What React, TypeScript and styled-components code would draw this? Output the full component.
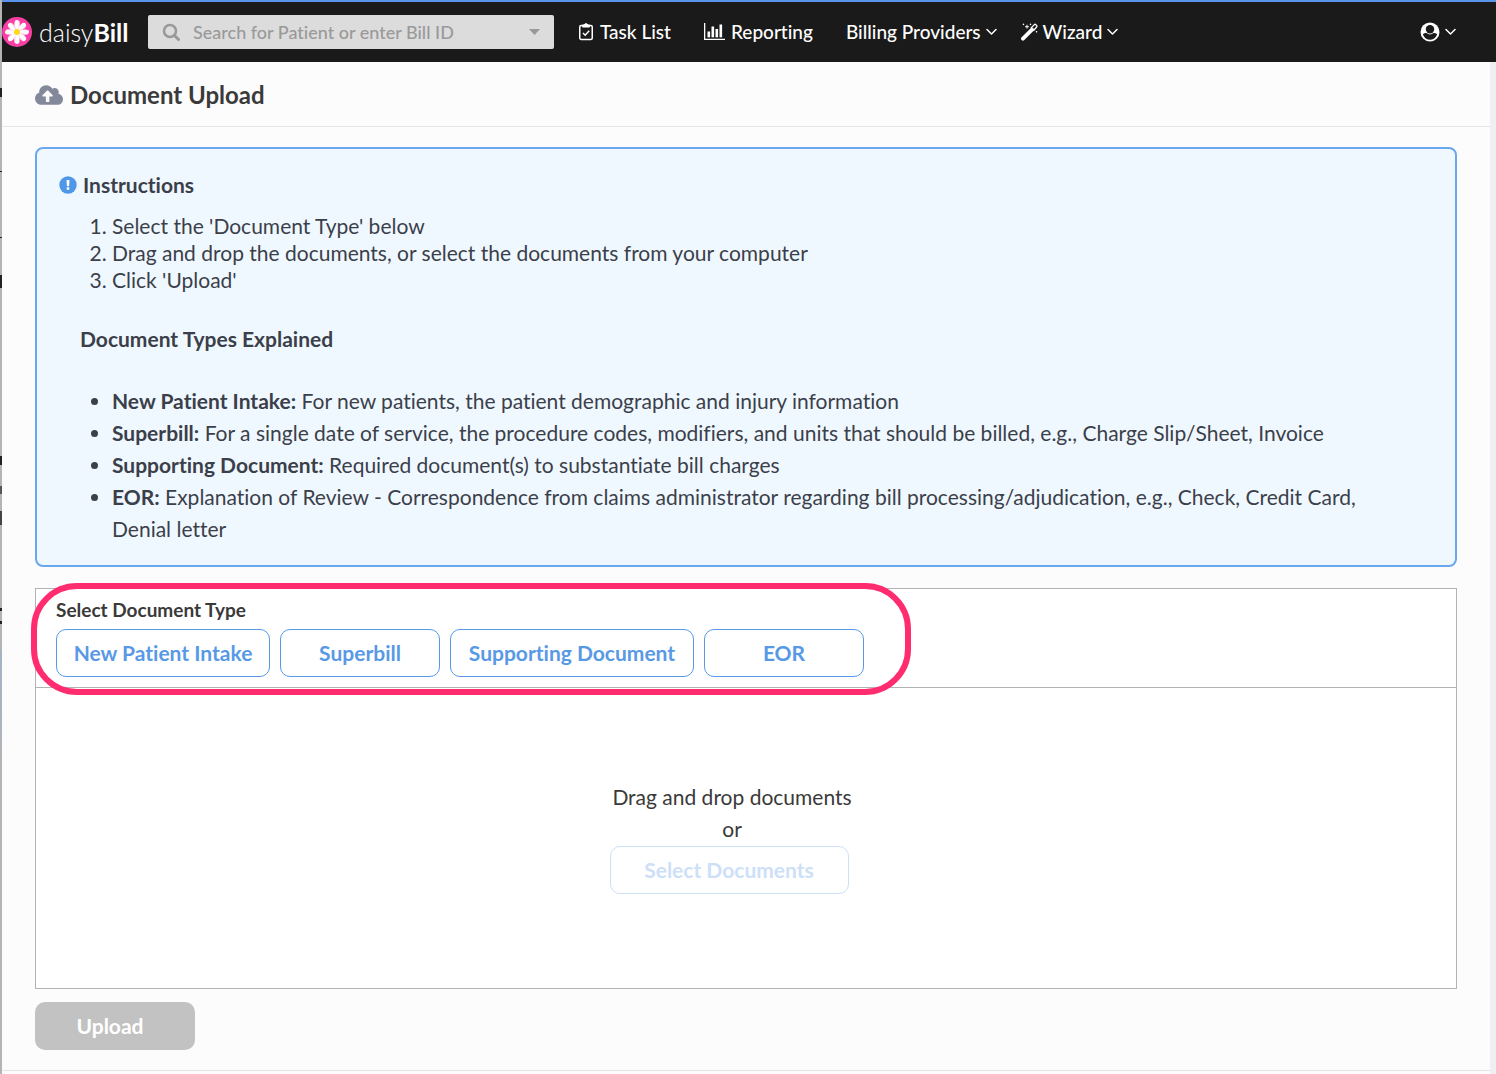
import React from "react";
import styled, { createGlobalStyle } from "styled-components";
import { FaCloudUploadAlt } from "react-icons/fa";

const Global = createGlobalStyle`
  *, *::before, *::after { box-sizing: border-box; }
  html, body { margin: 0; }
  body {
    font-family: Lato, "Liberation Sans", sans-serif;
    font-size: 21px;
    line-height: 32px;
    font-variant-ligatures: none;
    color: #3a3a3a;
    background: #fcfcfc;
  }
  h1, h2, h3, p, ul, ol { margin: 0; padding: 0; }
  button, input { font: inherit; font-variant-ligatures: none; }
`;

const Shell = styled.div`
  display: grid;
  grid-template-columns: 2px minmax(0, 1fr);
  min-height: 100vh;
`;

const WindowEdge = styled.div`
  background:
    linear-gradient(#222, #222) 0 88px / 2px 9px no-repeat,
    linear-gradient(#222, #222) 0 171px / 2px 1px no-repeat,
    linear-gradient(#222, #222) 0 237px / 2px 1px no-repeat,
    linear-gradient(#222, #222) 0 275px / 2px 13px no-repeat,
    linear-gradient(#222, #222) 0 456px / 2px 9px no-repeat,
    linear-gradient(#555, #555) 0 486px / 2px 8px no-repeat,
    linear-gradient(#444, #444) 0 511px / 2px 14px no-repeat,
    linear-gradient(#222, #222) 0 608px / 2px 3px no-repeat,
    linear-gradient(#222, #222) 0 621px / 2px 3px no-repeat,
    linear-gradient(#a3b4c6, #b4b4b4) 0 650px / 2px 130px no-repeat,
    #b4b4b4;
`;

const Page = styled.div`
  display: flex;
  flex-direction: column;
  min-width: 0;
`;

const TopBar = styled.header`
  display: flex;
  align-items: center;
  height: 62px;
  border-top: 2px solid #5b95ea;
  background: #1a1a1a;
  color: #fff;
  padding-right: 40px;
`;

const Brand = styled.a`
  display: flex;
  align-items: center;
  gap: 7px;
  width: 146px;
  color: #fff;
  text-decoration: none;
  font-size: 25px;
  font-weight: 300;
  white-space: nowrap;

  svg { flex: none; }
  b { font-weight: 700; }
`;

const SearchBox = styled.label`
  display: flex;
  align-items: center;
  gap: 12px;
  flex: 0 1 406px;
  height: 34px;
  padding: 0 14px;
  border-radius: 2px;
  background: #dcdcdc;
  color: #999;

  input {
    flex: 1;
    min-width: 0;
    height: 32px;
    padding: 0;
    border: 0;
    outline: 0;
    background: transparent;
    font-size: 18px;
    font-weight: 500;
    color: #333;
  }
  input::placeholder { color: #999; opacity: 1; }
  svg { flex: none; }
`;

const Nav = styled.nav`
  display: flex;
  flex: 1;
  align-items: center;
  gap: 33px;
  padding-left: 24px;
`;

const MenuGroup = styled.div`
  display: flex;
  align-items: center;
  gap: 24px;
`;

const NavLink = styled.a`
  display: flex;
  align-items: center;
  gap: 6px;
  color: #fff;
  font-size: 19px;
  font-weight: 500;
  text-decoration: none;
  white-space: nowrap;
`;

const NavMenu = styled.button`
  display: flex;
  align-items: center;
  gap: 5px;
  padding: 0;
  border: 0;
  background: none;
  color: #fff;
  font-size: 19px;
  font-weight: 500;
  white-space: nowrap;
  cursor: pointer;
`;

const Backdrop = styled.div`
  display: flex;
  flex: 1;
  flex-direction: column;
  padding-right: 6px;
  background: #efeff1;
`;

const Body = styled.main`
  flex: 1;
  background: #fcfcfc;
`;

const TitleRow = styled.div`
  display: flex;
  align-items: center;
  gap: 7px;
  height: 65px;
  padding: 2px 33px 0;
  border-bottom: 1px solid #e6e6e6;

  svg { color: #84889b; }
  h1 { font-size: 24px; font-weight: 700; }
`;

const Content = styled.div`
  padding: 20px 33px;
  border-bottom: 1px solid #e3e3e3;
`;

const Instructions = styled.section`
  padding: 20px 22px;
  border: 2px solid #6ba7ee;
  border-radius: 8px;
  background: #f0f8ff;
  color: #3b3f4a;

  h2 {
    display: flex;
    align-items: center;
    gap: 6px;
    font-size: 21px;
    font-weight: 700;
  }
  h3 {
    margin: 30px 0;
    padding-left: 21px;
    font-size: 21px;
    font-weight: 700;
  }
`;

const Steps = styled.ol`
  && { margin-top: 11px; padding-left: 53px; }
  line-height: 27px;
`;

const Types = styled.ul`
  && { padding: 0 32px 0 53px; }
  b { font-weight: 700; }
`;

const UploadPanel = styled.section`
  position: relative;
  margin-top: 21px;
  border: 1px solid #b3b3b3;
  background: #fff;
`;

const TypePicker = styled.div`
  padding: 5px 20px 10px;
  border-bottom: 1px solid #b3b3b3;

  h2 { font-size: 19px; font-weight: 700; }
`;

const TypeRow = styled.div`
  display: flex;
  flex-wrap: wrap;
  gap: 10px;
  padding-top: 3px;
`;

const OutlineButton = styled.button<{ $width: number }>`
  min-width: ${(p) => p.$width}px;
  height: 48px;
  padding: 0 16px;
  border: 1px solid #5899e6;
  border-radius: 10px;
  background: #fff;
  color: #5899e6;
  font-weight: 700;
  white-space: nowrap;
  cursor: pointer;

  &:disabled {
    border-color: #cde0f8;
    color: #cde0f8;
    cursor: default;
  }
`;

const Highlight = styled.div`
  position: absolute;
  top: -6px;
  left: -5px;
  width: 880px;
  height: 112px;
  border: 6px solid #ff2d6f;
  border-radius: 46px;
  pointer-events: none;
`;

const DropZone = styled.div`
  display: flex;
  justify-content: center;
  padding: 93px 28px 94px 0;
`;

const DropGroup = styled.div`
  display: flex;
  flex-direction: column;
  align-items: flex-start;
  min-width: 245px;

  p { align-self: center; }
  button { margin-top: 1px; }
`;

const UploadButton = styled.button`
  width: 160px;
  height: 48px;
  margin-top: 13px;
  padding: 0 10px 0 0;
  border: 0;
  border-radius: 10px;
  background: #c2c2c2;
  color: #fff;
  font-weight: 700;
`;

const petals = [0, 45, 90, 135, 180, 225, 270, 315];

const Daisy = () => (
  <svg width="30" height="30" viewBox="0 0 30 30" aria-hidden="true">
    <circle cx="15" cy="15" r="15" fill="#f93fa6" />
    {petals.map((a) => (
      <g key={a} transform={`rotate(${a} 15 15)`}>
        <path d="M15 15C12 10.500 11.200 3 14.800 3C19 3 18.500 10.500 15 15Z" fill="#fff" />
        <path d="M15 15C16.500 11 18 8 17.200 4.500" stroke="#fbb6dc" strokeWidth="0.8" fill="none" />
      </g>
    ))}
    <circle cx="15" cy="15" r="3" fill="#ffd91a" />
  </svg>
);

const SearchIcon = () => (
  <svg width="19" height="19" viewBox="0 0 19 19" fill="none" stroke="currentColor" aria-hidden="true">
    <circle cx="8" cy="8" r="6" strokeWidth="2.5" />
    <path d="M12.500 12.500L16.500 16.500" strokeWidth="3" strokeLinecap="round" />
  </svg>
);

const CaretIcon = () => (
  <svg width="11" height="6" viewBox="0 0 11 6" fill="currentColor" aria-hidden="true">
    <path d="M0 0H11L5.500 6Z" />
  </svg>
);

const Chevron = () => (
  <svg width="11" height="8" viewBox="0 0 11 8" fill="none" stroke="currentColor" strokeWidth="1.5" strokeLinecap="round" strokeLinejoin="round" aria-hidden="true">
    <path d="M1 1.500L5.500 6L10 1.500" />
  </svg>
);

const TaskIcon = () => (
  <svg width="16" height="20" viewBox="0 0 16 20" fill="none" stroke="currentColor" strokeWidth="1.5" aria-hidden="true">
    <rect x="1.750" y="3.500" width="12.500" height="14" rx="1.500" />
    <path d="M4.500 5V3H6.300C6.500 1.200 9.500 1.200 9.700 3H11.500V5Z" fill="currentColor" strokeWidth="1" />
    <path d="M5 11L7.200 13.200L11.200 8.800" />
  </svg>
);

const ReportIcon = () => (
  <svg width="21" height="18" viewBox="0 0 21 18" fill="currentColor" aria-hidden="true">
    <path d="M0 0H1.300V15.700H21V17H0Z" />
    <rect x="3.500" y="8.500" width="2.600" height="5.800" />
    <rect x="7.500" y="3.500" width="2.600" height="10.800" />
    <rect x="11.500" y="6" width="2.600" height="8.300" />
    <rect x="15.500" y="1.500" width="2.600" height="12.800" />
  </svg>
);

const WandIcon = () => (
  <svg width="17" height="18" viewBox="0 0 17 18" fill="none" stroke="currentColor" aria-hidden="true">
    <path d="M2 15.700L11 6.700" strokeWidth="3.800" strokeLinecap="round" />
    <path d="M9.900 5.300L13.300 1.600Q14 0.900 14.600 1.500L15.700 2.600Q16.300 3.300 15.600 4L12.400 7.700" strokeWidth="1.300" />
    <path d="M6 1.800V5.600M4.100 3.700H7.900M2.500 0.700V2.100M1.800 1.400H3.200M9.500 0.700V2.100M8.800 1.400H10.200M15.500 8V9.400M14.800 8.700H16.200" strokeWidth="1" />
  </svg>
);

const UserIcon = () => (
  <svg width="20" height="20" viewBox="0 0 20 20" aria-hidden="true">
    <circle cx="10" cy="10" r="9.500" fill="#fff" />
    <path d="M2.800 12.300C3.800 11.500 5 11.200 6.500 11.100C8.600 13 11.400 13 13.500 11.100C15 11.200 16.200 11.500 17.200 12.300C14.600 19.700 5.400 19.700 2.800 12.300Z" fill="#1a1a1a" />
    <circle cx="10" cy="7.300" r="4.200" fill="#1a1a1a" />
  </svg>
);

const InfoIcon = () => (
  <svg width="18" height="18" viewBox="0 0 18 18" aria-hidden="true">
    <circle cx="9" cy="9" r="8.700" fill="#4f97e8" />
    <path d="M7.500 4H10.500L10.100 10.200H7.900Z" fill="#fff" />
    <rect x="7.700" y="11.300" width="2.600" height="2.500" rx="0.600" fill="#fff" />
  </svg>
);

const steps = [
  "Select the 'Document Type' below",
  "Drag and drop the documents, or select the documents from your computer",
  "Click 'Upload'",
];

const explained = [
  ["New Patient Intake:", "For new patients, the patient demographic and injury information"],
  ["Superbill:", "For a single date of service, the procedure codes, modifiers, and units that should be billed, e.g., Charge Slip/Sheet, Invoice"],
  ["Supporting Document:", "Required document(s) to substantiate bill charges"],
  ["EOR:", "Explanation of Review - Correspondence from claims administrator regarding bill processing/adjudication, e.g., Check, Credit Card, Denial letter"],
];

const documentTypes = [
  { label: "New Patient Intake", width: 214 },
  { label: "Superbill", width: 160 },
  { label: "Supporting Document", width: 244 },
  { label: "EOR", width: 160 },
];

export default function App() {
  return (
    <>
      <Global />
      <Shell>
        <WindowEdge />
        <Page>
          <TopBar>
            <Brand href="#">
              <Daisy />
              <span>daisy<b>Bill</b></span>
            </Brand>
            <SearchBox>
              <SearchIcon />
              <input type="text" aria-label="Search" placeholder="Search for Patient or enter Bill ID" />
              <CaretIcon />
            </SearchBox>
            <Nav>
              <NavLink href="#"><TaskIcon />Task List</NavLink>
              <NavLink href="#"><ReportIcon />Reporting</NavLink>
              <MenuGroup>
                <NavMenu>Billing Providers<Chevron /></NavMenu>
                <NavMenu><WandIcon />Wizard<Chevron /></NavMenu>
              </MenuGroup>
            </Nav>
            <NavMenu aria-label="Account"><UserIcon /><Chevron /></NavMenu>
          </TopBar>
          <Backdrop>
            <Body>
              <TitleRow>
                <FaCloudUploadAlt size={28} />
                <h1>Document Upload</h1>
              </TitleRow>
              <Content>
                <Instructions>
                  <h2><InfoIcon />Instructions</h2>
                  <Steps>{steps.map((s) => <li key={s}>{s}</li>)}</Steps>
                  <h3>Document Types Explained</h3>
                  <Types>
                    {explained.map(([name, text]) => (
                      <li key={name}><b>{name}</b> {text}</li>
                    ))}
                  </Types>
                </Instructions>
                <UploadPanel>
                  <TypePicker>
                    <h2>Select Document Type</h2>
                    <TypeRow>
                      {documentTypes.map((d) => (
                        <OutlineButton key={d.label} $width={d.width}>{d.label}</OutlineButton>
                      ))}
                    </TypeRow>
                  </TypePicker>
                  <DropZone>
                    <DropGroup>
                      <p>Drag and drop documents</p>
                      <p>or</p>
                      <OutlineButton $width={239} disabled>Select Documents</OutlineButton>
                    </DropGroup>
                  </DropZone>
                  <Highlight />
                </UploadPanel>
                <UploadButton disabled>Upload</UploadButton>
              </Content>
            </Body>
          </Backdrop>
        </Page>
      </Shell>
    </>
  );
}
